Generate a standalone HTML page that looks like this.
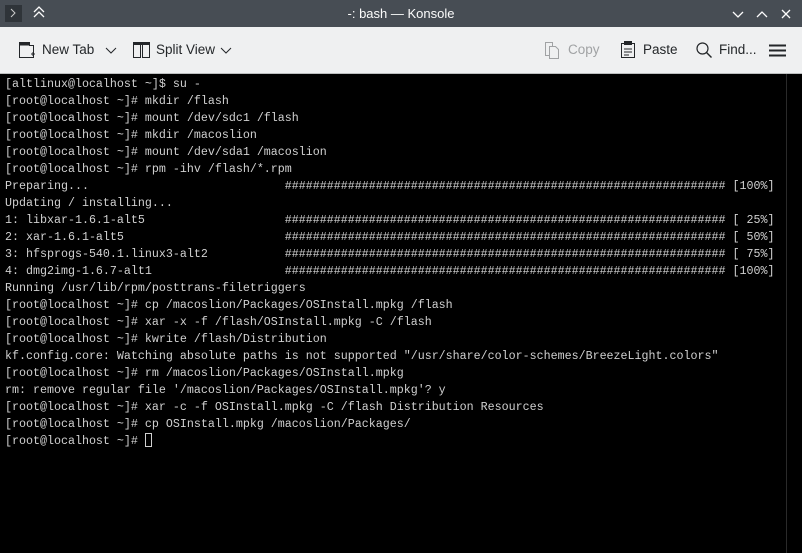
<!DOCTYPE html>
<html><head><meta charset="utf-8"><style>
body{margin:0;width:802px;height:553px;overflow:hidden;background:#000;font-family:"Liberation Sans",sans-serif}
#title{position:absolute;left:0;top:0;width:802px;height:27px;background:#474d54;color:#fcfcfc;font-size:13px}
#title .t{position:absolute;left:0;right:0;top:6px;text-align:center}
#tb{position:absolute;left:0;top:27px;width:802px;height:46px;background:#eff0f1;color:#232629;font-size:13.5px;border-bottom:1px solid #bcbebf}
.it{position:absolute;top:15px}
#term{position:absolute;left:5px;top:76px;font-family:"Liberation Mono",monospace;font-size:11.67px;line-height:17px;color:#d0d0d0;white-space:pre;letter-spacing:0}
#sb{position:absolute;left:786px;top:74px;width:1px;height:479px;background:#2a2a2a}
</style></head><body>
<div id="title">
<div style="position:absolute;left:5px;top:5px;width:17px;height:17px;background:#2f3439"></div>
<svg style="position:absolute;left:0;top:0" width="60" height="27"><path d="M11 9l4 4-4 4" stroke="#ccc" fill="none"/><path d="M34 12l5-5 5 5M34 17l5-5 5 5" stroke="#fcfcfc" fill="none" stroke-width="1.3"/></svg>
<div class="t">-: bash — Konsole</div>
<svg style="position:absolute;left:728px;top:0" width="74" height="27"><path d="M5 12l5 5 5-5" stroke="#fcfcfc" fill="none" stroke-width="1.3"/><path d="M29 17l5-5 5 5" stroke="#fcfcfc" fill="none" stroke-width="1.3"/><path d="M54 10l8 8M62 10l-8 8" stroke="#fcfcfc" stroke-width="1.3"/></svg>
</div>
<div id="tb">
<svg style="position:absolute;left:18px;top:14px" width="18" height="18"><path d="M1.5 1.5h10v3h4v12h-14z" stroke="#232629" fill="none"/><rect x="1.5" y="1.5" width="10" height="3" fill="#232629"/><path d="M13 13h4M15 11v4" stroke="#232629"/></svg>
<span class="it" style="left:42px">New Tab</span>
<svg style="position:absolute;left:105px;top:20px" width="12" height="8"><path d="M1 1l5 5 5-5" stroke="#232629" fill="none"/></svg>
<svg style="position:absolute;left:133px;top:15px" width="18" height="17"><rect x="0.5" y="0.5" width="7" height="15" stroke="#232629" fill="none"/><rect x="9.5" y="0.5" width="7" height="15" stroke="#232629" fill="none"/><rect x="0" y="0" width="17" height="3" fill="#232629"/></svg>
<span class="it" style="left:156px">Split View</span>
<svg style="position:absolute;left:220px;top:20px" width="12" height="8"><path d="M1 1l5 5 5-5" stroke="#232629" fill="none"/></svg>
<svg style="position:absolute;left:544px;top:15px" width="16" height="18"><path d="M1.5 0.5h7v13h-7z" stroke="#a0a2a4" fill="none"/><path d="M5.5 4.5h6l3 3v9h-9z" stroke="#a0a2a4" fill="#eff0f1"/></svg>
<span class="it" style="left:568px;color:#a0a2a4">Copy</span>
<svg style="position:absolute;left:620px;top:14px" width="16" height="18"><rect x="1.5" y="2.5" width="13" height="14" stroke="#232629" fill="none"/><rect x="4" y="0" width="8" height="4" fill="#232629"/><path d="M4 8h8M4 11h8M4 14h5" stroke="#232629"/></svg>
<span class="it" style="left:643px">Paste</span>
<svg style="position:absolute;left:696px;top:15px" width="17" height="17"><circle cx="6.5" cy="6.5" r="5.5" stroke="#232629" fill="none" stroke-width="1.2"/><path d="M10.5 10.5l5 5" stroke="#232629" stroke-width="1.4"/></svg>
<span class="it" style="left:719px">Find...</span>
<svg style="position:absolute;left:769px;top:17px" width="18" height="13"><path d="M0 1.5h17M0 6.5h17M0 11.5h17" stroke="#232629" stroke-width="2"/></svg>
</div>
<div id="sb"></div>
<div id="term">[altlinux@localhost ~]$ su -
[root@localhost ~]# mkdir /flash
[root@localhost ~]# mount /dev/sdc1 /flash
[root@localhost ~]# mkdir /macoslion
[root@localhost ~]# mount /dev/sda1 /macoslion
[root@localhost ~]# rpm -ihv /flash/*.rpm
Preparing...                            ############################################################### [100%]
Updating / installing...
1: libxar-1.6.1-alt5                    ############################################################### [ 25%]
2: xar-1.6.1-alt5                       ############################################################### [ 50%]
3: hfsprogs-540.1.linux3-alt2           ############################################################### [ 75%]
4: dmg2img-1.6.7-alt1                   ############################################################### [100%]
Running /usr/lib/rpm/posttrans-filetriggers
[root@localhost ~]# cp /macoslion/Packages/OSInstall.mpkg /flash
[root@localhost ~]# xar -x -f /flash/OSInstall.mpkg -C /flash
[root@localhost ~]# kwrite /flash/Distribution
kf.config.core: Watching absolute paths is not supported "/usr/share/color-schemes/BreezeLight.colors"
[root@localhost ~]# rm /macoslion/Packages/OSInstall.mpkg
rm: remove regular file '/macoslion/Packages/OSInstall.mpkg'? y
[root@localhost ~]# xar -c -f OSInstall.mpkg -C /flash Distribution Resources
[root@localhost ~]# cp OSInstall.mpkg /macoslion/Packages/
[root@localhost ~]# <span style="display:inline-block;width:7px;height:14px;border:1px solid #d0d0d0;box-sizing:border-box;vertical-align:-3px"></span></div>
</body></html>
